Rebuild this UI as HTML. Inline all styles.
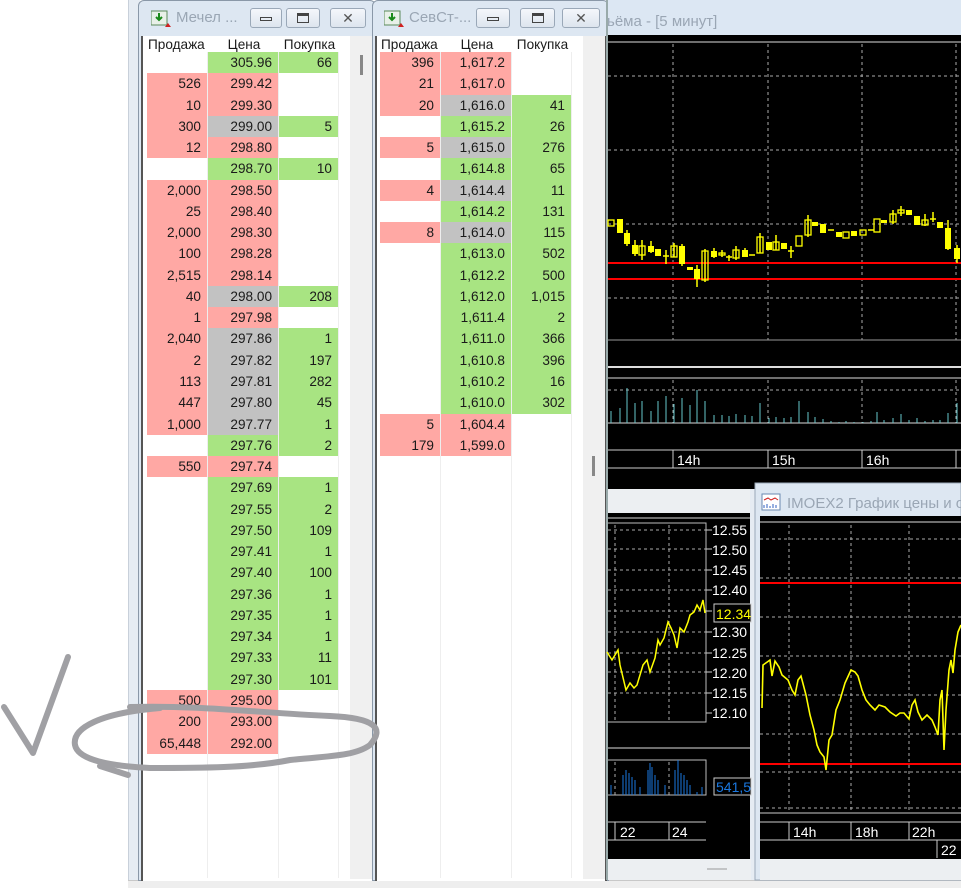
<!DOCTYPE html>
<html><head><meta charset="utf-8">
<style>
*{margin:0;padding:0;box-sizing:border-box}
body{width:961px;height:888px;position:relative;overflow:hidden;background:#fff;font-family:"Liberation Sans","DejaVu Sans",sans-serif;font-size:13.6px;color:#1a1a1a}
.abs{position:absolute}
.tb{height:21.27px;display:flex}
.tb div{height:21.27px;line-height:21px;text-align:right;padding-right:6px;margin-right:1px}
.c1{width:60px}.c2{width:70px}.c3{width:59px}
.r{background:#ffa8a4}.g{background:#a8e482}.s{background:#c2c2c2}
.hdr{display:flex;height:16px;line-height:16px}
.hdr div{text-align:center;margin-right:1px}
.title{font-size:15px;color:#9aa6b4}
.btn{position:absolute;top:8px;height:20px;border:1px solid #9aa8b8;border-radius:3px;background:linear-gradient(#f4f7fb,#dde5ee)}
</style></head><body>

<div class="abs" style="left:128px;top:0;width:12px;height:880px;background:#e6ecf3;border-left:1px solid #c8d0da"></div>
<div class="abs" style="left:128px;top:880px;width:833px;height:8px;background:#eeeeee;border-top:1px solid #c8c8c8"></div>

<!-- Window 1 -->
<div class="abs" style="left:138px;top:0;width:238px;height:881px;background:#dde7f2;border:1px solid #8a98a8;border-radius:6px 6px 0 0"></div>
<div class="abs" style="left:141px;top:36px;width:233px;height:845px;background:#fff;border-left:2px solid #555;border-right:2px solid #555"></div>
<div class="abs" style="left:350px;top:36px;width:22px;height:843px;background:#f0f0f0"></div>
<div class="abs" style="left:360px;top:55px;width:3px;height:20px;background:#888"></div>
<div class="abs" style="left:207px;top:52px;width:1px;height:826px;background:#eee"></div>
<div class="abs" style="left:278px;top:52px;width:1px;height:826px;background:#eee"></div>
<div class="abs" style="left:338px;top:52px;width:1px;height:826px;background:#eee"></div>
<svg class="abs" style="left:151px;top:10px" width="20" height="18"><rect x="0" y="1" width="16" height="14" fill="#e8f0e8" stroke="#5a8a5a"/><path d="M8 3v7M5 7l3 3 3-3" stroke="#1a8a1a" stroke-width="2" fill="none"/><path d="M14 17l3-4 3 4z" fill="#d02020"/></svg>
<div class="abs title" style="left:176px;top:9px">Мечел ...</div>
<div class="btn" style="left:250px;width:32px"><div style="margin:8px auto 0;width:12px;height:4px;border:1px solid #444"></div></div>
<div class="btn" style="left:286px;width:34px"><div style="margin:4px auto 0;width:12px;height:10px;border:1px solid #444;border-top-width:3px"></div></div>
<div class="btn" style="left:330px;width:36px;text-align:center;line-height:18px;font-size:14px;font-weight:bold;color:#555">✕</div>

<div class="abs hdr" style="left:148px;top:37px"><div class="c1" style="text-align:left">Продажа</div><div class="c2">Цена</div><div class="c3">Покупка</div></div>
<div class="abs" style="left:147px;top:52px">
<div class="tb"><div class="c1"></div><div class="c2 g">305.96</div><div class="c3 g">66</div></div>
<div class="tb"><div class="c1 r">526</div><div class="c2 r">299.42</div><div class="c3"></div></div>
<div class="tb"><div class="c1 r">10</div><div class="c2 r">299.30</div><div class="c3"></div></div>
<div class="tb"><div class="c1 r">300</div><div class="c2 s">299.00</div><div class="c3 g">5</div></div>
<div class="tb"><div class="c1 r">12</div><div class="c2 r">298.80</div><div class="c3"></div></div>
<div class="tb"><div class="c1"></div><div class="c2 g">298.70</div><div class="c3 g">10</div></div>
<div class="tb"><div class="c1 r">2,000</div><div class="c2 r">298.50</div><div class="c3"></div></div>
<div class="tb"><div class="c1 r">25</div><div class="c2 r">298.40</div><div class="c3"></div></div>
<div class="tb"><div class="c1 r">2,000</div><div class="c2 r">298.30</div><div class="c3"></div></div>
<div class="tb"><div class="c1 r">100</div><div class="c2 r">298.28</div><div class="c3"></div></div>
<div class="tb"><div class="c1 r">2,515</div><div class="c2 r">298.14</div><div class="c3"></div></div>
<div class="tb"><div class="c1 r">40</div><div class="c2 s">298.00</div><div class="c3 g">208</div></div>
<div class="tb"><div class="c1 r">1</div><div class="c2 r">297.98</div><div class="c3"></div></div>
<div class="tb"><div class="c1 r">2,040</div><div class="c2 s">297.86</div><div class="c3 g">1</div></div>
<div class="tb"><div class="c1 r">2</div><div class="c2 s">297.82</div><div class="c3 g">197</div></div>
<div class="tb"><div class="c1 r">113</div><div class="c2 s">297.81</div><div class="c3 g">282</div></div>
<div class="tb"><div class="c1 r">447</div><div class="c2 s">297.80</div><div class="c3 g">45</div></div>
<div class="tb"><div class="c1 r">1,000</div><div class="c2 s">297.77</div><div class="c3 g">1</div></div>
<div class="tb"><div class="c1"></div><div class="c2 g">297.76</div><div class="c3 g">2</div></div>
<div class="tb"><div class="c1 r">550</div><div class="c2 r">297.74</div><div class="c3"></div></div>
<div class="tb"><div class="c1"></div><div class="c2 g">297.69</div><div class="c3 g">1</div></div>
<div class="tb"><div class="c1"></div><div class="c2 g">297.55</div><div class="c3 g">2</div></div>
<div class="tb"><div class="c1"></div><div class="c2 g">297.50</div><div class="c3 g">109</div></div>
<div class="tb"><div class="c1"></div><div class="c2 g">297.41</div><div class="c3 g">1</div></div>
<div class="tb"><div class="c1"></div><div class="c2 g">297.40</div><div class="c3 g">100</div></div>
<div class="tb"><div class="c1"></div><div class="c2 g">297.36</div><div class="c3 g">1</div></div>
<div class="tb"><div class="c1"></div><div class="c2 g">297.35</div><div class="c3 g">1</div></div>
<div class="tb"><div class="c1"></div><div class="c2 g">297.34</div><div class="c3 g">1</div></div>
<div class="tb"><div class="c1"></div><div class="c2 g">297.33</div><div class="c3 g">11</div></div>
<div class="tb"><div class="c1"></div><div class="c2 g">297.30</div><div class="c3 g">101</div></div>
<div class="tb"><div class="c1 r">500</div><div class="c2 r">295.00</div><div class="c3"></div></div>
<div class="tb"><div class="c1 r">200</div><div class="c2 r">293.00</div><div class="c3"></div></div>
<div class="tb"><div class="c1 r">65,448</div><div class="c2 r">292.00</div><div class="c3"></div></div>
</div>

<!-- Window 2 -->
<div class="abs" style="left:372px;top:0;width:237px;height:881px;background:#dde7f2;border:1px solid #8a98a8;border-radius:6px 6px 0 0"></div>
<div class="abs" style="left:375px;top:36px;width:232px;height:845px;background:#fff;border-left:2px solid #555;border-right:2px solid #555"></div>
<div class="abs" style="left:583px;top:36px;width:22px;height:843px;background:#f0f0f0"></div>
<div class="abs" style="left:592px;top:456px;width:3px;height:20px;background:#888"></div>
<div class="abs" style="left:440px;top:52px;width:1px;height:826px;background:#eee"></div>
<div class="abs" style="left:511px;top:52px;width:1px;height:826px;background:#eee"></div>
<div class="abs" style="left:571px;top:52px;width:1px;height:826px;background:#eee"></div>
<svg class="abs" style="left:384px;top:10px" width="20" height="18"><rect x="0" y="1" width="16" height="14" fill="#e8f0e8" stroke="#5a8a5a"/><path d="M8 3v7M5 7l3 3 3-3" stroke="#1a8a1a" stroke-width="2" fill="none"/><path d="M14 17l3-4 3 4z" fill="#d02020"/></svg>
<div class="abs title" style="left:409px;top:9px">СевСт-...</div>
<div class="btn" style="left:476px;width:34px"><div style="margin:8px auto 0;width:12px;height:4px;border:1px solid #444"></div></div>
<div class="btn" style="left:520px;width:35px"><div style="margin:4px auto 0;width:12px;height:10px;border:1px solid #444;border-top-width:3px"></div></div>
<div class="btn" style="left:562px;width:38px;text-align:center;line-height:18px;font-size:14px;font-weight:bold;color:#555">✕</div>

<div class="abs hdr" style="left:381px;top:37px"><div class="c1" style="text-align:left">Продажа</div><div class="c2">Цена</div><div class="c3">Покупка</div></div>
<div class="abs" style="left:380px;top:52px">
<div class="tb"><div class="c1 r">396</div><div class="c2 r">1,617.2</div><div class="c3"></div></div>
<div class="tb"><div class="c1 r">21</div><div class="c2 r">1,617.0</div><div class="c3"></div></div>
<div class="tb"><div class="c1 r">20</div><div class="c2 s">1,616.0</div><div class="c3 g">41</div></div>
<div class="tb"><div class="c1"></div><div class="c2 g">1,615.2</div><div class="c3 g">26</div></div>
<div class="tb"><div class="c1 r">5</div><div class="c2 s">1,615.0</div><div class="c3 g">276</div></div>
<div class="tb"><div class="c1"></div><div class="c2 g">1,614.8</div><div class="c3 g">65</div></div>
<div class="tb"><div class="c1 r">4</div><div class="c2 s">1,614.4</div><div class="c3 g">11</div></div>
<div class="tb"><div class="c1"></div><div class="c2 g">1,614.2</div><div class="c3 g">131</div></div>
<div class="tb"><div class="c1 r">8</div><div class="c2 s">1,614.0</div><div class="c3 g">115</div></div>
<div class="tb"><div class="c1"></div><div class="c2 g">1,613.0</div><div class="c3 g">502</div></div>
<div class="tb"><div class="c1"></div><div class="c2 g">1,612.2</div><div class="c3 g">500</div></div>
<div class="tb"><div class="c1"></div><div class="c2 g">1,612.0</div><div class="c3 g">1,015</div></div>
<div class="tb"><div class="c1"></div><div class="c2 g">1,611.4</div><div class="c3 g">2</div></div>
<div class="tb"><div class="c1"></div><div class="c2 g">1,611.0</div><div class="c3 g">366</div></div>
<div class="tb"><div class="c1"></div><div class="c2 g">1,610.8</div><div class="c3 g">396</div></div>
<div class="tb"><div class="c1"></div><div class="c2 g">1,610.2</div><div class="c3 g">16</div></div>
<div class="tb"><div class="c1"></div><div class="c2 g">1,610.0</div><div class="c3 g">302</div></div>
<div class="tb"><div class="c1 r">5</div><div class="c2 r">1,604.4</div><div class="c3"></div></div>
<div class="tb"><div class="c1 r">179</div><div class="c2 r">1,599.0</div><div class="c3"></div></div>
</div>

<svg class="abs" style="left:0;top:0" width="961" height="888" font-family="Liberation Sans, sans-serif">
<rect x="607" y="0" width="354" height="36" fill="#dce7f3"/>
<line x1="607" y1="0" x2="607" y2="880" stroke="#9aa" stroke-width="2"/>
<text x="607" y="26" font-size="15" fill="#9aa6b4">ьёма - [5 минут]</text>
<rect x="608" y="35" width="353" height="454" fill="#000"/>
<line x1="608" y1="42" x2="961" y2="42" stroke="#ddd"/>
<g stroke="#aaa" stroke-dasharray="3,3">
<path d="M673 44V340M768 44V340M862 44V340M956 44V340M608 76H961M608 150H961M608 224H961M608 298H961"/>
<path d="M673 380V423M768 380V423M862 380V423M956 380V423M608 390H961"/>
</g>
<line x1="608" y1="340" x2="961" y2="340" stroke="#999"/>
<line x1="608" y1="367" x2="961" y2="367" stroke="#ddd" stroke-width="2"/>
<line x1="608" y1="378" x2="961" y2="378" stroke="#ddd"/>
<line x1="608" y1="423" x2="961" y2="423" stroke="#ddd"/>
<g stroke="#66c8cc"><path d="M611 423v-12M620 423v-15M627 423v-35M635 423v-20M642 423v-22M651 423v-12M658 423v-22M666 423v-27M674 423v-19M682 423v-25M690 423v-18M697 423v-33M705 423v-22M714 423v-8M722 423v-8M729 423v-7M736 423v-9M745 423v-8M752 423v-7M760 423v-20M769 423v-5M776 423v-6M784 423v-5M791 423v-6M799 423v-22M808 423v-11M815 423v-6M823 423v-4M831 423v-2M839 423v-1M846 423v-2M854 423v-1M863 423v-1M871 423v-2M877 423v-11M884 423v-3M893 423v-5M901 423v-9M909 423v-3M917 423v-5M925 423v-2M933 423v-3M940 423v-3M948 423v-10M957 423v-20"/></g>
<line x1="608" y1="263" x2="961" y2="263" stroke="#f00" stroke-width="2"/>
<line x1="608" y1="279" x2="961" y2="279" stroke="#f00" stroke-width="2"/>
<g fill="#ff0" stroke="#ff0" stroke-width="1.5">
<path d="M627 230v16M635 240v16M642 240v20M651 241v12M666 250v14M674 243v14M682 244v22M697 265v22M705 249v33M714 248v10M722 250v7M729 255v6M736 246v14M745 248v8M760 233v20M776 235v15M791 246v12M808 215v22M893 210v14M901 206v10M925 214v12M933 212v10M948 220v30M957 245v18"/>
<rect x="617" y="219" width="6" height="14" stroke="none"/><rect x="624" y="233" width="6" height="11" stroke="none"/><rect x="632" y="245" width="6" height="9" stroke="none"/><rect x="648" y="246" width="6" height="6" stroke="none"/><rect x="655" y="249" width="6" height="7" stroke="none"/><rect x="679" y="246" width="6" height="18" stroke="none"/><rect x="687" y="267" width="6" height="3" stroke="none"/><rect x="694" y="269" width="6" height="10" stroke="none"/><rect x="711" y="251" width="6" height="6" stroke="none"/><rect x="742" y="250" width="6" height="7" stroke="none"/><rect x="766" y="242" width="6" height="8" stroke="none"/><rect x="781" y="243" width="6" height="6" stroke="none"/><rect x="812" y="222" width="6" height="4" stroke="none"/><rect x="820" y="224" width="6" height="9" stroke="none"/><rect x="836" y="232" width="6" height="5" stroke="none"/><rect x="851" y="231" width="6" height="5" stroke="none"/><rect x="881" y="220" width="6" height="3" stroke="none"/><rect x="906" y="210" width="6" height="5" stroke="none"/><rect x="914" y="216" width="6" height="9" stroke="none"/><rect x="937" y="222" width="6" height="6" stroke="none"/><rect x="945" y="228" width="6" height="21" stroke="none"/><rect x="954" y="248" width="6" height="11" stroke="none"/>
<path d="M663 256h6M726 257h6M749 255h6M788 251h6M828 230h6M868 230h6M930 219h6"/>
</g>
<g fill="none" stroke="#ff0" stroke-width="1.3">
<rect x="608" y="220" width="6" height="6"/><rect x="639" y="246" width="6" height="9"/><rect x="671" y="246" width="6" height="11"/><rect x="702" y="251" width="6" height="29"/><rect x="719" y="253" width="6" height="2"/><rect x="733" y="250" width="6" height="8"/><rect x="757" y="237" width="6" height="16"/><rect x="773" y="242" width="6" height="8"/><rect x="796" y="236" width="6" height="10"/><rect x="805" y="220" width="6" height="15"/><rect x="843" y="232" width="6" height="6"/><rect x="860" y="230" width="6" height="5"/><rect x="874" y="219" width="6" height="13"/><rect x="890" y="214" width="6" height="8"/><rect x="898" y="210" width="6" height="3"/><rect x="922" y="220" width="6" height="5"/>
</g>
<line x1="608" y1="450" x2="961" y2="450" stroke="#ccc"/>
<line x1="608" y1="468" x2="961" y2="468" stroke="#ccc"/>
<path d="M673 450v18M768 450v18M862 450v18M956 450v18" stroke="#ccc"/>
<g fill="#fff" font-size="14"><text x="677" y="465">14h</text><text x="772" y="465">15h</text><text x="866" y="465">16h</text></g>

<rect x="608" y="489" width="143" height="24" fill="#eceff2"/>
<rect x="608" y="513" width="142" height="346" fill="#000"/>
<rect x="750" y="489" width="6" height="391" fill="#e6ecf3"/>
<line x1="608" y1="518" x2="750" y2="518" stroke="#ddd"/>
<g stroke="#aaa" stroke-dasharray="3,3"><path d="M615 525V722M669 525V722M608 530H706M608 549H706M608 570H706M608 590H706M608 611H706M608 632H706M608 653H706M608 672H706M608 693H706"/>
<path d="M615 762V795M669 762V795"/></g>
<path d="M608 523H706V722H608" fill="none" stroke="#bbb"/>
<path d="M706 530h6M706 549h6M706 570h6M706 590h6M706 611h6M706 632h6M706 653h6M706 672h6M706 693h6M706 713h6" stroke="#ccc"/>
<g fill="#fff" font-size="14"><text x="712" y="535">12.55</text><text x="712" y="555">12.50</text><text x="712" y="575">12.45</text><text x="712" y="595">12.40</text><text x="712" y="637">12.30</text><text x="712" y="658">12.25</text><text x="712" y="678">12.20</text><text x="712" y="698">12.15</text><text x="712" y="718">12.10</text></g>
<rect x="714" y="604" width="37" height="18" fill="#000" stroke="#ccc"/>
<text x="716" y="619" fill="#ff0" font-size="14">12.34</text>
<polyline fill="none" stroke="#ff0" stroke-width="1.5" points="607,652 612,660 618,650 620,665 626,690 630,683 634,688 637,685 643,665 647,660 650,672 655,658 658,640 660,645 664,638 668,622 671,628 674,635 677,648 680,628 684,632 688,622 690,615 694,612 697,605 700,610 703,600 705,613"/>
<line x1="608" y1="748" x2="750" y2="748" stroke="#ddd"/>
<path d="M608 760H706V795H608" fill="none" stroke="#bbb"/>
<g stroke="#1a78e0"><path d="M611 795v-10M623 795v-20M626 795v-25M629 795v-22M632 795v-18M635 795v-15M640 795v-8M648 795v-25M650 795v-32M652 795v-28M655 795v-20M658 795v-15M665 795v-10M675 795v-25M678 795v-35M681 795v-22M684 795v-20M687 795v-15M690 795v-10M697 795v-3M702 795v-8"/></g>
<rect x="714" y="778" width="37" height="17" fill="#000" stroke="#ccc"/>
<text x="716" y="792" fill="#1a78e0" font-size="14">541,5</text>
<path d="M608 822H706M608 840H706M615 822v18M669 822v18" stroke="#ccc"/>
<g fill="#fff" font-size="14"><text x="620" y="837">22</text><text x="672" y="837">24</text></g>
<rect x="608" y="859" width="143" height="21" fill="#eceff2"/>
<line x1="707" y1="869" x2="727" y2="869" stroke="#999"/>

<rect x="755" y="483" width="206" height="397" fill="#dde7f2" stroke="#9aa8b8"/>
<rect x="762" y="494" width="18" height="16" fill="#fff" stroke="#6a8ab0"/>
<path d="M764 500l4-2 3 2 4-2 3 2" stroke="#d02020" fill="none"/>
<path d="M764 508v-3M767 508v-4M770 508v-2M773 508v-4M776 508v-3" stroke="#3060c0"/>
<text x="787" y="508" font-size="15" fill="#9aa6b4">IMOEX2 График цены и о</text>
<rect x="760" y="516" width="201" height="343" fill="#000"/>
<line x1="760" y1="522" x2="961" y2="522" stroke="#ddd"/>
<g stroke="#aaa" stroke-dasharray="3,3"><path d="M789 525V812M851 525V812M909 525V812M760 539H961M760 578H961M760 617H961M760 656H961M760 695H961M760 734H961M760 772H961M760 808H961"/></g>
<line x1="760" y1="583" x2="961" y2="583" stroke="#f00" stroke-width="2"/>
<line x1="760" y1="764" x2="961" y2="764" stroke="#f00" stroke-width="2"/>
<polyline fill="none" stroke="#ff0" stroke-width="1.6" points="762,708 763,665 770,660 772,676 775,661 779,667 782,675 788,680 792,690 795,695 798,680 801,676 806,695 810,715 814,730 817,745 820,752 824,757 826,770 829,740 832,735 836,710 840,700 845,683 851,670 855,672 858,676 862,690 866,700 870,705 875,710 879,705 885,707 890,712 896,716 900,713 904,713 909,719 912,705 915,700 918,712 922,720 927,715 932,720 935,727 938,735 940,700 942,690 944,750 946,710 949,670 951,660 953,673 955,650 958,632 961,625"/>
<path d="M760 813H961M760 822H961M760 840H961M789 822v18M851 822v18M909 822v18M937 840v18" stroke="#ccc"/>
<g fill="#fff" font-size="14"><text x="793" y="837">14h</text><text x="855" y="837">18h</text><text x="912" y="837">22h</text><text x="941" y="855">22</text></g>
<rect x="760" y="859" width="201" height="21" fill="#eceff2"/>

<g fill="none" stroke="#a0a0a4" stroke-width="6" stroke-linecap="round" stroke-linejoin="round">
<path d="M4 707L33 753L68 657"/>
<path d="M130 707C200 705 260 713 330 716C375 718 385 728 370 745C355 756 330 756 290 760C250 768 200 768 150 768C110 766 78 760 75 745C72 728 100 713 160 708"/>
<path d="M100 766L128 775"/>
</g>
</svg>
</body></html>
